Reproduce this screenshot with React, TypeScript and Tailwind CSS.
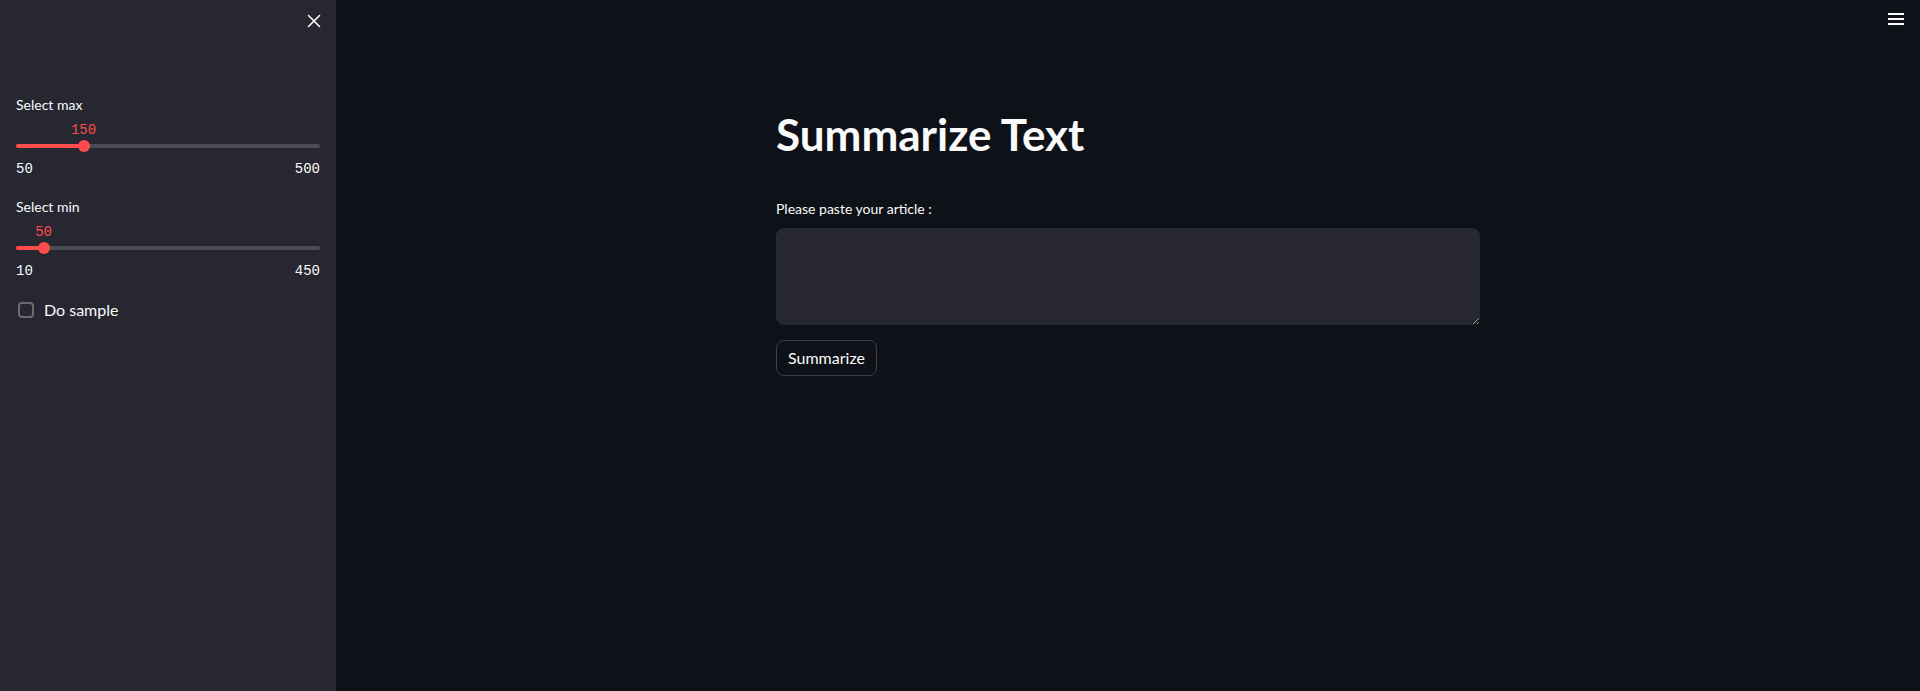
import { useState } from "react";

const sans = "font-['Lato','Noto_Sans',sans-serif]";
const mono = "font-['Liberation_Mono','DejaVu_Sans_Mono',monospace]";

type SliderProps = { label: string; min: number; max: number; value: number };

function Slider({ label, min, max, value }: SliderProps) {
  const pct = ((value - min) / (max - min)) * 100;
  return (
    <div className="flex flex-col">
      <div className="h-5 text-sm leading-5 text-[#fafafa]">{label}</div>
      <div className="relative h-10">
        <div
          className={`absolute top-[5px] -translate-x-1/2 text-sm leading-5 text-[#ff4b4b] ${mono}`}
          style={{ left: `${pct}%` }}
        >
          {value}
        </div>
        <div className="absolute left-0 right-0 top-[29px] h-1 rounded-full bg-[#4b4c55]">
          <div className="h-1 rounded-full bg-[#ff4b4b]" style={{ width: `${pct}%` }} />
        </div>
        <div
          className="absolute top-[25px] h-3 w-3 -translate-x-1/2 rounded-full bg-[#ff4b4b]"
          style={{ left: `${pct}%` }}
        />
      </div>
      <div className={`mt-1 flex h-5 justify-between text-sm leading-5 text-[#fafafa] ${mono}`}>
        <span>{min}</span>
        <span>{max}</span>
      </div>
    </div>
  );
}

export default function App() {
  const [text, setText] = useState("");
  const [sample, setSample] = useState(false);
  return (
    <div className={`flex h-[691px] w-full overflow-hidden bg-[#0e1117] text-[#fafafa] ${sans}`}>
      <aside className="relative flex w-[336px] shrink-0 flex-col bg-[#262730] px-4 pt-[95px]">
        <button className="absolute right-[12px] top-[11px] flex h-5 w-5 items-center justify-center text-[#fafafa]">
          <svg width="14" height="14" viewBox="0 0 14 14" fill="none" stroke="currentColor" strokeWidth="1.6" strokeLinecap="round">
            <path d="M1.5 1.5l11 11M12.5 1.5l-11 11" />
          </svg>
        </button>
        <Slider label="Select max" min={50} max={500} value={150} />
        <div className="mt-[18px]">
          <Slider label="Select min" min={10} max={450} value={50} />
        </div>
        <label className="mt-[17px] flex h-6 cursor-pointer items-center gap-[10px] pl-[2px]">
          <span
            onClick={() => setSample(!sample)}
            className="h-4 w-4 rounded-[4px] border-2 border-[#6b6c73] bg-[#262730]"
          />
          <span className="text-base text-[#fafafa]">Do sample</span>
        </label>
      </aside>
      <main className="relative flex flex-1 justify-center">
        <button className="absolute right-4 top-[13px] flex flex-col gap-[3px]">
          <span className="block h-[2px] w-4 bg-[#fafafa]" />
          <span className="block h-[2px] w-4 bg-[#fafafa]" />
          <span className="block h-[2px] w-4 bg-[#fafafa]" />
        </button>
        <div className="flex w-[704px] flex-col pt-[108px]">
          <h1 className="text-[44px] font-bold leading-[1.2] text-[#fafafa]">Summarize Text</h1>
          <div className="mt-[38px] text-sm leading-5 text-[#fafafa]">Please paste your article :</div>
          <textarea
            value={text}
            onChange={(e) => setText(e.target.value)}
            className="mt-[9px] h-[97px] w-full rounded-lg bg-[#262730] px-4 py-3 text-base text-[#fafafa] outline-none"
          />
          <div className="mt-[15px]">
            <button className="h-[36px] rounded-lg border border-[#3d3f46] bg-[#0e1117] px-[11px] text-base text-[#fafafa]">
              Summarize
            </button>
          </div>
        </div>
      </main>
    </div>
  );
}
